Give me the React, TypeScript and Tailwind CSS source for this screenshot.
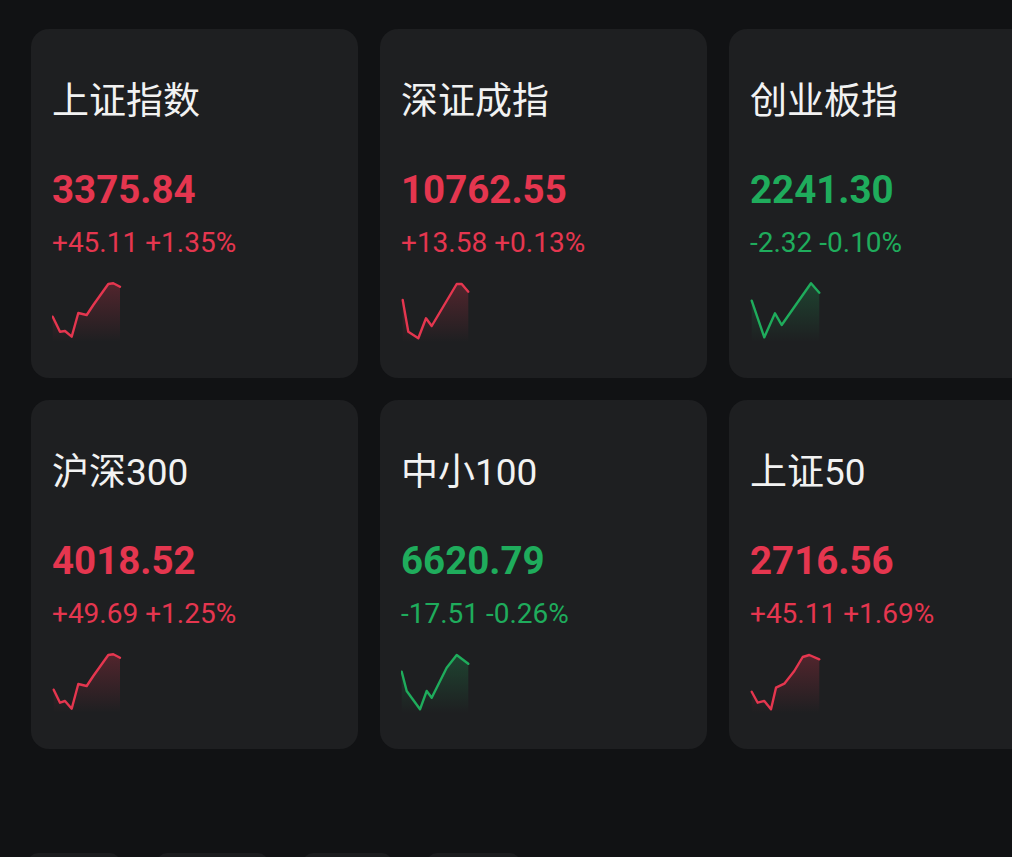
import React from "react";

type Pt = [number, number];

const RED = "#e5364f";
const GREEN = "#1fac5c";

const shapeA: Pt[] = [[0.7,34.7],[8,49.7],[13,49],[19.7,54.7],[26.3,31],[34.7,33],[41.3,23],[49.7,11.3],[56.3,2],[61.3,1.3],[68,4.7]];
const shapeB: Pt[] = [[1.7,18],[7.3,49.7],[17.3,56.3],[25,36.3],[30.7,44],[55.7,2],[60.7,2],[67.3,9.7]];
const shapeC: Pt[] = [[1.7,18.7],[14.3,55.3],[25,31.3],[31.7,43],[61,1.3],[69.3,10.7]];
const shapeD: Pt[] = [[1.7,36.7],[8,49.7],[13,48],[19.7,55.7],[26.3,31],[34.7,33],[41.3,23],[49.7,11.3],[56.3,2],[61.3,1.3],[68,4.7]];
const shapeE: Pt[] = [[0.7,18.7],[5.7,38],[19,56.3],[25.7,38],[30.7,44.7],[45.7,14.7],[55.7,2],[67.3,10.7]];
const shapeF: Pt[] = [[1.7,38.7],[7.7,49.7],[14.3,48],[21,56.3],[26,34.7],[34.3,30.7],[44.3,18],[52.7,4],[59.3,2],[69.3,6.3]];

function Spark({ pts, color, id }: { pts: Pt[]; color: string; id: string }) {
  const line = pts.map((p, i) => `${i ? "L" : "M"}${p[0]},${p[1]}`).join(" ");
  const last = pts[pts.length - 1];
  const area = `${line} L${last[0]},60 L${pts[0][0]},60 Z`;
  return (
    <svg width="72" height="60" viewBox="0 0 72 60" className="block">
      <defs>
        <linearGradient id={id} x1="0" y1="0" x2="0" y2="1">
          <stop offset="0" stopColor={color} stopOpacity="0.26" />
          <stop offset="1" stopColor={color} stopOpacity="0" />
        </linearGradient>
      </defs>
      <path d={area} fill={`url(#${id})`} />
      <path d={line} fill="none" stroke={color} strokeWidth="2.4" strokeLinejoin="round" strokeLinecap="round" />
    </svg>
  );
}

type Item = { name: string; value: string; change: string; up: boolean; pts: Pt[] };

const items: Item[] = [
  { name: "上证指数", value: "3375.84", change: "+45.11 +1.35%", up: true, pts: shapeA },
  { name: "深证成指", value: "10762.55", change: "+13.58 +0.13%", up: true, pts: shapeB },
  { name: "创业板指", value: "2241.30", change: "-2.32 -0.10%", up: false, pts: shapeC },
  { name: "沪深300", value: "4018.52", change: "+49.69 +1.25%", up: true, pts: shapeD },
  { name: "中小100", value: "6620.79", change: "-17.51 -0.26%", up: false, pts: shapeE },
  { name: "上证50", value: "2716.56", change: "+45.11 +1.69%", up: true, pts: shapeF },
];

function Card({ item, idx }: { item: Item; idx: number }) {
  const color = item.up ? RED : GREEN;
  return (
    <div className="w-[327px] h-[349px] shrink-0 rounded-[18px] bg-[#1e1f21] pl-[21px] pt-[53px] flex flex-col">
      <div className="h-[40px] leading-[40px] text-[37px] text-[#f2f2f2] whitespace-nowrap" style={{ fontFamily: "Roboto, 'Noto Sans CJK SC', sans-serif" }}>
        {item.name}
      </div>
      <div
        className={`mt-[48px] h-[40px] leading-[40px] text-[38.5px] font-bold whitespace-nowrap ${item.up ? "text-[#e5364f]" : "text-[#1fac5c]"}`}
        style={{ fontFamily: "Roboto, sans-serif" }}
      >
        {item.value}
      </div>
      <div
        className={`mt-[19px] h-[28px] leading-[28px] text-[28px] whitespace-nowrap ${item.up ? "text-[#e5364f]" : "text-[#1fac5c]"}`}
        style={{ fontFamily: "Roboto, sans-serif" }}
      >
        {item.change}
      </div>
      <div className="mt-[25px]">
        <Spark pts={item.pts} color={color} id={`g${idx}`} />
      </div>
    </div>
  );
}

export default function App() {
  return (
    <div className="w-[1012px] h-[857px] overflow-hidden bg-[#111214]">
      <div className="pl-[31px] pt-[29px] flex flex-col gap-[22px]">
        <div className="flex gap-[22px]">
          {items.slice(0, 3).map((it, i) => (
            <Card key={i} item={it} idx={i} />
          ))}
        </div>
        <div className="flex gap-[22px]">
          {items.slice(3, 6).map((it, i) => (
            <Card key={i} item={it} idx={i + 3} />
          ))}
        </div>
      </div>
      <div className="mt-[104px] pl-[28px] flex">
        <div className="w-[92px] h-[40px] rounded-[10px] bg-[#1b1c1e]" />
        <div className="ml-[37px] w-[111px] h-[40px] rounded-[10px] bg-[#1b1c1e]" />
        <div className="ml-[35px] w-[89px] h-[40px] rounded-[10px] bg-[#1b1c1e]" />
        <div className="ml-[35px] w-[93px] h-[40px] rounded-[10px] bg-[#1b1c1e]" />
      </div>
    </div>
  );
}
